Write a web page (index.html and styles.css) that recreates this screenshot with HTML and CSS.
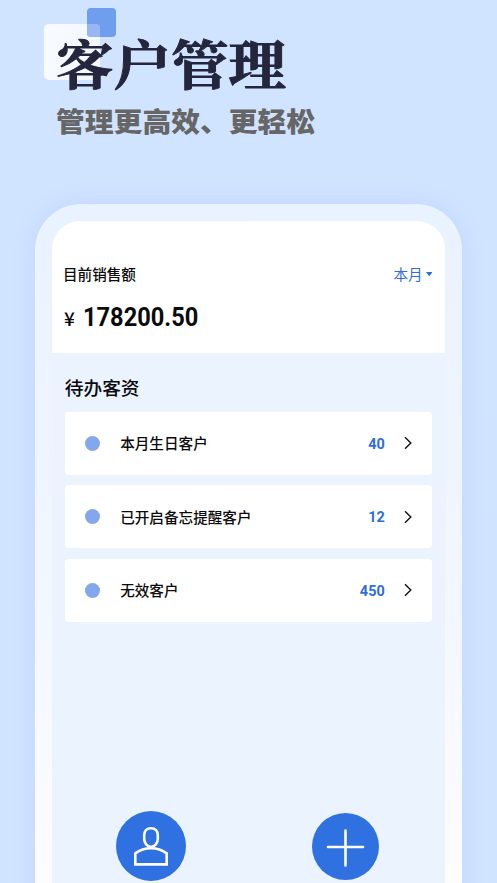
FILE: index.html
```
<!DOCTYPE html>
<html lang="zh-CN">
<head>
<meta charset="utf-8">
<title>客户管理</title>
<link rel="stylesheet" href="styles.css">
</head>
<body>
<main class="page">
  <header class="hero">
    <span class="square square-white"></span>
    <span class="square square-blue"></span>
    <h1 class="title">客户管理</h1>
    <p class="subtitle">管理更高效、更轻松</p>
  </header>
  <div class="phone">
    <div class="screen">
      <section class="sales">
        <div class="sales-head">
          <span class="label">目前销售额</span>
          <span class="period">本月<svg class="caret" viewBox="0 0 6 4"><path d="M0 0H6L3 4Z"/></svg></span>
        </div>
        <div class="amount"><span class="yen">¥</span><span class="value">178200.50</span></div>
      </section>
      <section class="todo">
        <h2 class="todo-title">待办客资</h2>
        <div class="list">
          <div class="card"><span class="dot"></span><span class="name">本月生日客户</span><span class="count">40</span><svg class="chevron" viewBox="0 0 8 14"><path d="M1 1.2L6.8 7L1 12.8"/></svg></div>
          <div class="card"><span class="dot"></span><span class="name">已开启备忘提醒客户</span><span class="count">12</span><svg class="chevron" viewBox="0 0 8 14"><path d="M1 1.2L6.8 7L1 12.8"/></svg></div>
          <div class="card"><span class="dot"></span><span class="name">无效客户</span><span class="count">450</span><svg class="chevron" viewBox="0 0 8 14"><path d="M1 1.2L6.8 7L1 12.8"/></svg></div>
        </div>
      </section>
      <nav class="actions">
        <svg class="user" viewBox="0 0 70 70"><circle cx="35" cy="35" r="35"/><path d="M35 17.2C39.3 17.2 41.8 20 41.8 24.2V28C41.8 32 39 35.8 35 35.8S28.2 32 28.2 28V24.2C28.2 20 30.7 17.2 35 17.2ZM19.3 53.4V42.4C28.5 35.5 41.5 35.5 50.7 42.4V53.4Z"/></svg>
        <svg class="add" viewBox="0 0 67 67"><circle cx="33.5" cy="33.5" r="33.5"/><path d="M33.5 17.5V52.5M16 34H51"/></svg>
      </nav>
    </div>
  </div>
</main>
</body>
</html>
```

FILE: styles.css
```
* { box-sizing: border-box; }
body {
  margin: 0;
  background: #d0e3ff;
  font-family: "Noto Sans CJK SC", "Noto Sans", sans-serif;
  color: #0b0b0d;
}
.page { height: 883px; overflow: hidden; }
.hero { position: relative; height: 203.5px; padding: 30px 0 0 56px; }
.square { position: absolute; }
.square-blue { left: 87px; top: 8px; width: 28.5px; height: 28.5px; border-radius: 4px; background: #709eee; overflow: hidden; }
.square-blue::after { content: ""; position: absolute; left: 0; top: 16px; width: 13px; height: 12.5px; border-radius: 0 4px 0 0; background: #97b6f3; }
.square-white { left: 43.5px; top: 24px; width: 56.5px; height: 56px; border-radius: 5px; background: linear-gradient(90deg, #f8fbff, #f3f8ff); }
.title {
  position: relative;
  margin: 0;
  font: 700 57.5px/68px "Noto Serif CJK SC", "Noto Serif SC", "Source Han Serif SC", "Noto Sans CJK SC", serif;
  color: #24263d;
  transform: scaleY(.935);
  transform-origin: 0 0;
  -webkit-text-stroke: 1px #24263d;
}
.subtitle { margin: 2.5px 0 0; font-size: 28.8px; line-height: 40px; font-weight: 800; color: #666; white-space: nowrap; transform: scaleY(.95); }
.phone {
  width: 426.5px;
  height: 740px;
  margin-left: 35.3px;
  padding: 17px 16.7px 0;
  border-radius: 46px 46px 0 0;
  background: linear-gradient(#e9f2ff, #ecf4ff 20%, #f3f7ff 55%, #fcfdff 95%);
  box-shadow: 0 0 20px 1px #c3d7fd;
}
.screen { height: 723px; border-radius: 28px 28px 0 0; overflow: hidden; background: #ebf3ff; }
.sales { height: 132.5px; padding: 41px 12px 0 11px; background: #fff; }
.sales-head { display: flex; justify-content: space-between; align-items: center; height: 24px; font-size: 14.6px; }
.label { font-weight: 500; }
.period { display: flex; align-items: center; color: #2d6de0; }
.caret { width: 6.5px; height: 4.3px; margin: 1px 1px 0 3px; fill: #2d6de0; }
.amount { display: flex; align-items: baseline; height: 36px; margin-top: 13.2px; line-height: 36px; }
.yen { width: 20px; padding-left: 1px; font-size: 19px; font-weight: 500; }
.value { font-family: Roboto, sans-serif; font-size: 25.4px; font-weight: 700; transform: scaleX(.93); transform-origin: 0 50%; }
.todo { padding: 20px 12.8px 0; }
.todo-title { margin: 0; font-size: 18.7px; line-height: 28px; font-weight: 500; }
.list { display: grid; gap: 10.6px; margin-top: 11px; }
.card { display: flex; align-items: center; height: 62.8px; padding: 0 20.5px 0 20.4px; border-radius: 4px; background: #fff; }
.dot { width: 15px; height: 15px; border-radius: 50%; background: #83a7ec; }
.name { margin: -1px 0 0 20px; font-size: 14.6px; font-weight: 500; }
.count { margin: 1px 0 0 auto; font: 700 15.5px/20px Roboto, sans-serif; color: #2d6de0; transform: scaleX(.93); transform-origin: 100% 50%; }
.chevron { width: 8px; height: 14px; margin-left: 19px; fill: none; stroke: #111; stroke-width: 1.4; }
.actions { display: flex; justify-content: space-between; align-items: center; padding: 189.5px 66px 0 64.5px; }
.actions svg { fill: none; stroke: #fff; stroke-width: 2.6; }
.actions circle { fill: #3071e1; stroke: none; }
.user { width: 70px; height: 70px; }
.add { width: 67px; height: 67px; stroke-linecap: round; }
```
